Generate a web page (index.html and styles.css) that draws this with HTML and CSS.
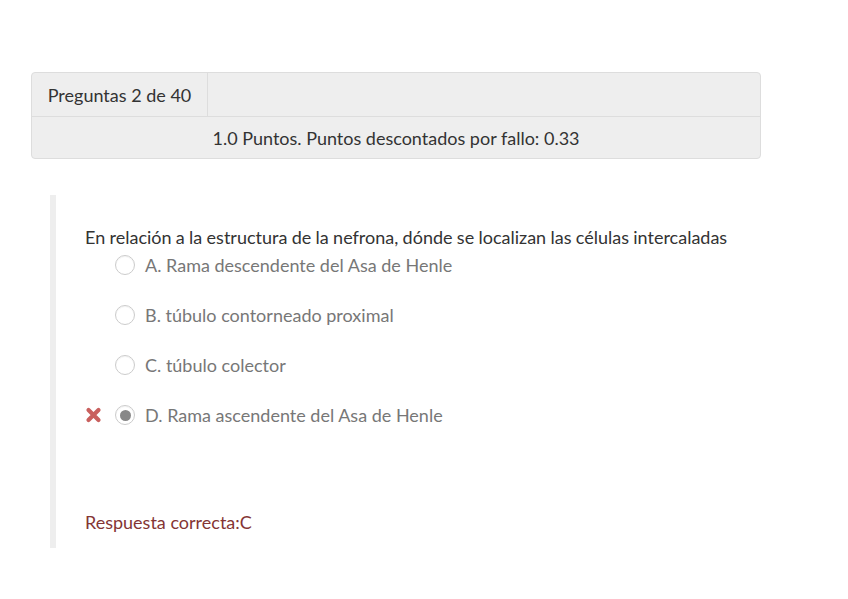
FILE: index.html
```html
<!DOCTYPE html>
<html lang="es">
<head>
<meta charset="utf-8">
<title>Pregunta</title>
<link rel="stylesheet" href="styles.css">
</head>
<body>
<div class="page">
  <table class="info">
    <tr>
      <td class="num">Preguntas 2 de 40</td>
      <td class="blank"></td>
    </tr>
    <tr>
      <td class="points" colspan="2">1.0 Puntos. Puntos descontados por fallo: 0.33</td>
    </tr>
  </table>

  <div class="question">
    <p class="stem">En relación a la estructura de la nefrona, dónde se localizan las células intercaladas</p>
    <ul class="options">
      <li class="opt"><span class="mark"></span><span class="radio"></span><span class="label">A. Rama descendente del Asa de Henle</span></li>
      <li class="opt"><span class="mark"></span><span class="radio"></span><span class="label">B. túbulo contorneado proximal</span></li>
      <li class="opt"><span class="mark"></span><span class="radio"></span><span class="label">C. túbulo colector</span></li>
      <li class="opt"><span class="mark wrong"><svg width="17" height="16" viewBox="0 0 17 16"><path d="M3.5 3 L13.5 13 M13.5 3 L3.5 13" stroke="#c9605e" stroke-width="4.2" stroke-linecap="round"/></svg></span><span class="radio checked"></span><span class="label">D. Rama ascendente del Asa de Henle</span></li>
    </ul>
    <p class="answer">Respuesta correcta:C</p>
  </div>
</div>
</body>
</html>
```

FILE: styles.css
```css
html, body {
  margin: 0;
  padding: 0;
  background: #ffffff;
}
body {
  font-family: Lato, "Open Sans", sans-serif;
  color: #333333;
}
.page {
  padding: 72px 0 0 31px;
}
.info {
  width: 730px;
  border-collapse: separate;
  border-spacing: 0;
  background: #eeeeee;
  border: 1px solid #dddddd;
  border-radius: 4px;
  font-size: 18px;
  color: #333333;
}
.info td {
  padding: 0;
}
.num {
  width: 175px;
  height: 43px;
  text-align: center;
  border-right: 1px solid #dddddd;
  border-bottom: 1px solid #dddddd;
}
.blank {
  border-bottom: 1px solid #dddddd;
}
.points {
  height: 41px;
  text-align: center;
}
.question {
  margin: 36px 0 0 19px;
  border-left: 6px solid #eeeeee;
  padding: 30px 0 15px 29px;
  width: 700px;
}
.stem {
  margin: 0;
  font-size: 18px;
  line-height: 24px;
  word-spacing: -0.3px;
  color: #333333;
}
.options {
  list-style: none;
  margin: 0;
  padding: 0;
}
.opt {
  display: flex;
  align-items: center;
  height: 50px;
  margin-top: -9px;
}
.opt + .opt {
  margin-top: 0;
}
.mark {
  width: 30px;
  display: flex;
  align-items: center;
  padding-left: 0;
}
.radio {
  width: 20px;
  height: 20px;
  box-sizing: border-box;
  border: 1px solid #cccccc;
  border-radius: 50%;
  background: #ffffff;
  margin-right: 10px;
  display: flex;
  align-items: center;
  justify-content: center;
  box-shadow: inset 0 1px 1px rgba(0,0,0,0.05);
}
.radio.checked::after {
  content: "";
  width: 11px;
  height: 11px;
  border-radius: 50%;
  background: #888888;
}
.label {
  font-size: 18px;
  color: #777777;
}
.answer {
  margin: 71px 0 0;
  font-size: 18px;
  color: #843534;
}
```
